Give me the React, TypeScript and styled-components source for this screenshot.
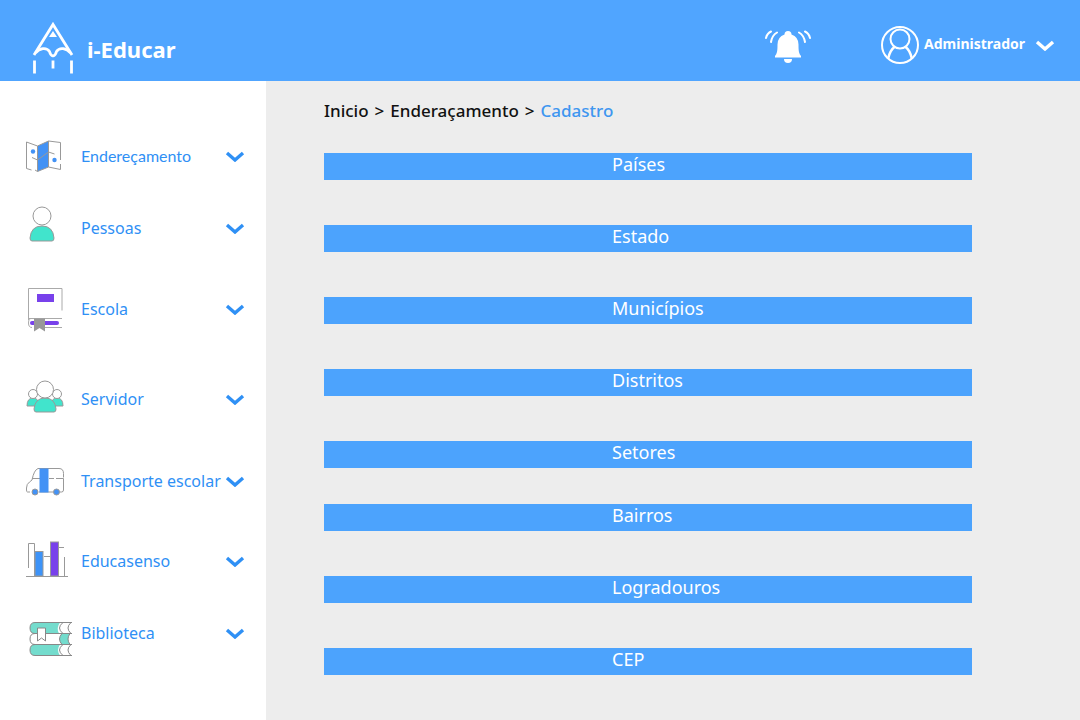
import React from "react";
import styled, { createGlobalStyle } from "styled-components";

const GlobalStyle = createGlobalStyle`
  *, *::before, *::after { box-sizing: border-box; }
  body {
    margin: 0;
    background: #fff;
    font-family: "Noto Sans", "Open Sans", sans-serif;
  }
  button { font: inherit; border: 0; background: none; padding: 0; cursor: pointer; }
  a { color: inherit; text-decoration: none; }
  svg { display: block; flex: none; }
`;

const Page = styled.div`
  min-height: 100vh;
  display: flex;
  flex-direction: column;
`;

const Header = styled.header`
  height: 81px;
  display: flex;
  align-items: center;
  padding: 8px 25px 0 32px;
  background: #50a5ff;
  color: #fff;
`;

const Brand = styled.a`
  display: flex;
  align-items: center;
  gap: 13px;
  margin-right: auto;
  padding-top: 4px;
  font-size: 22px;
  line-height: 30px;
  font-weight: 700;
`;

const BrandName = styled.span`
  padding-top: 4px;
`;

const BellButton = styled.button`
  color: #fff;
  margin: 4px 70px 0 0;
`;

const AccountButton = styled.button`
  display: flex;
  align-items: center;
  gap: 5px;
  color: #fff;
  font-size: 14px;
  line-height: 20px;
  font-weight: 700;
`;

const AccountName = styled.span`
  margin-right: 5px;
  padding-bottom: 2px;
`;

const Body = styled.div`
  flex: 1;
  display: flex;
`;

const Sidebar = styled.nav`
  width: 266px;
  flex: none;
  padding-top: 39px;
  background: #fff;
`;

const MenuItem = styled.button<{ $height: number; $narrow?: boolean }>`
  width: 100%;
  height: ${(p) => p.$height}px;
  display: grid;
  grid-template-columns: 56px 1fr 20px;
  align-items: center;
  padding: 0 21px 0 25px;
  color: #2f90f5;
  font-family: ${(p) => (p.$narrow ? '"Lato", sans-serif' : "inherit")};
  font-size: 16px;
  line-height: 24px;
  text-align: left;
  white-space: nowrap;
`;

const Main = styled.main`
  flex: 1;
  min-width: 0;
  padding: 18px 108px 45px 58px;
  background: #ededed;
`;

const Breadcrumb = styled.nav`
  display: flex;
  flex-wrap: wrap;
  gap: 6px;
  margin-bottom: 30px;
  color: #111;
  font-size: 17px;
  line-height: 24px;
  font-weight: 500;
`;

const Current = styled.a`
  color: #3e96f0;
`;

const Groups = styled.div`
  display: flex;
  flex-direction: column;
  gap: 36px;
`;

const LinkList = styled.ul`
  list-style: none;
  margin: 0;
  padding: 0;
  display: flex;
  flex-direction: column;
  gap: 45px;
`;

const BarLink = styled.a`
  display: grid;
  grid-template-columns: 4fr 5fr;
  height: 27px;
  background: #4ca3fd;
  color: #fff;
  font-size: 18px;
  line-height: 22px;
`;

const BarLabel = styled.span`
  grid-column: 2;
`;

const Chevron = () => (
  <svg width="20" height="12" viewBox="0 0 20 12" fill="none" stroke="currentColor" strokeWidth="3.4" aria-hidden="true">
    <path d="M2 3l8 7 8-7" strokeLinejoin="miter" />
  </svg>
);

const LogoIcon = () => (
  <svg width="42" height="54" viewBox="0 0 42 54" fill="none" stroke="#fff" aria-hidden="true">
    <path d="M2 35L21 4.500l19 30.500" strokeWidth="2.800" />
    <path d="M3.500 33c4-5 11-6 14-1.500q1 4 3.500 4.500q2.500-.5 3.500-4.500c3-4.500 10-3.500 14 1.500" strokeWidth="2.800" />
    <path d="M21 11l4 6h-8z" fill="#fff" stroke="none" />
    <path d="M2.500 40.500v13M39.500 40.500v13" strokeWidth="2.800" />
    <path d="M21 40.500v8" strokeWidth="2.800" />
  </svg>
);

const BellIcon = () => (
  <svg width="46" height="34" viewBox="0 0 46 34" fill="none" stroke="currentColor" strokeWidth="2" strokeLinecap="round" aria-hidden="true">
    <path d="M23 1a3.500 3.500 0 0 1 3.500 3.500q7 2.500 7 10c0 7 .5 9 2.500 11.500v1.500H10V26c2-2.500 2.500-4.500 2.500-11.500q0-7.500 7-10A3.500 3.500 0 0 1 23 1z" fill="currentColor" stroke="none" />
    <path d="M19 29h8q0 4-4 4t-4-4z" fill="currentColor" stroke="none" />
    <path d="M6 1.500Q2 3.500 1 8M12 2.500Q7 5.500 6 12M40 1.500q4 2 5 6.500M34 2.500q5 3 6 9.500" />
  </svg>
);

const AvatarIcon = () => (
  <svg width="38" height="38" viewBox="0 0 38 38" fill="none" stroke="currentColor" strokeWidth="2" aria-hidden="true">
    <circle cx="19" cy="19" r="18" />
    <ellipse cx="19" cy="13" rx="9.500" ry="9.500" />
    <path d="M7 33Q9 24 14 20.500M31 33q-2-9-7-12.500" strokeWidth="2.500" />
  </svg>
);

const MapIcon = () => (
  <svg width="38" height="32" viewBox="0 0 38 32" fill="none" stroke="#999" aria-hidden="true">
    <path d="M12.500 6L23.500 1v26l-11 4.500z" fill="#4392f5" />
    <path d="M12.500 6L1.500 2v26.500l5 1.500M23.500 1l12 1.500V20M35.500 24v5.500L23.500 27M10 30l2.500 1.500" />
    <path d="M7 17.500l5.500 2.500 11-8 6 2" />
    <circle cx="8" cy="11.500" r="2.200" fill="#4392f5" stroke="none" />
    <circle cx="29.500" cy="20" r="2.200" fill="#4392f5" stroke="none" />
  </svg>
);

const PersonIcon = () => (
  <svg width="34" height="44" viewBox="0 4 34 44" stroke="#999" fill="none" aria-hidden="true">
    <path d="M7 39q-2 0-2-3Q6 24 17 24t12 12q0 3-2 3z" fill="#41e4cc" />
    <circle cx="17" cy="14" r="9" fill="#fff" />
  </svg>
);

const BookIcon = () => (
  <svg width="38" height="46" viewBox="0 0 38 46" fill="none" stroke="#aaa" aria-hidden="true">
    <path d="M3.500 34V2.500H37v22M3.500 32.500H37M6 32.500q-2.500 0-2.500 4.500T7 41.500M20 41.500h17" />
    <rect x="12" y="8" width="17" height="8" fill="#7841eb" stroke="none" />
    <rect x="5" y="35" width="29" height="4" rx="2" fill="#7841eb" stroke="none" />
    <path d="M9 32.500h11v13l-5.500-3.500L9 45.500z" fill="#999" stroke="none" />
  </svg>
);

const TeamIcon = () => (
  <svg width="40" height="38" viewBox="0 3 40 38" fill="#41e4cc" stroke="#999" aria-hidden="true">
    <path d="M2 29q0-8 6-8t6 8zM26 29q0-8 6-8t6 8z" />
    <circle cx="8" cy="17" r="4.500" fill="#fff" />
    <circle cx="32" cy="17" r="4.500" fill="#fff" />
    <path d="M11 35q-2 0-2-3Q10 21 20 21t11 11q0 3-2 3z" />
    <circle cx="20" cy="12.500" r="8.500" fill="#fff" />
  </svg>
);

const VanIcon = () => (
  <svg width="40" height="30" viewBox="0 0 40 30" fill="none" stroke="#999" aria-hidden="true">
    <path d="M15 2.500h19q4.500 0 4.500 5v4M31 12.500h7.500V24q0 2-2 2H35M28 26H14M5 26H2.500q-1 0-1-2v-2q0-4 3-6l2.500-2q2-10 6-11.500h3M7 12.500h8M24 12.500h5" />
    <rect x="15" y="3" width="8" height="23" fill="#4392f5" stroke="#4392f5" />
    <circle cx="10" cy="26" r="3" fill="#4392f5" />
    <circle cx="31.500" cy="26" r="3" fill="#4392f5" />
  </svg>
);

const ChartIcon = () => (
  <svg width="44" height="40" viewBox="0 3 44 40" fill="none" stroke="#999" aria-hidden="true">
    <path d="M1 38.500h42M3.500 30V5.500h6V38M19 18.500h6M34 9.500h5M39.500 19v19" />
    <rect x="10" y="13.500" width="8" height="24.500" fill="#3d93f8" />
    <rect x="25.500" y="4" width="8" height="34" fill="#7841eb" />
  </svg>
);

const BooksIcon = () => (
  <svg width="48" height="48" viewBox="0 -12 48 48" fill="none" stroke="#888" aria-hidden="true">
    <path d="M46 1.500H10q-5 0-5 5.500t5 5.500h24q-3-5.500 1-11M46 23.500H10q-5 0-5 5.500t5 5.500h25q-4-5.500 0-11" fill="#74dccd" stroke="none" />
    <path d="M37 12.500h8q-4 5.500 0 11h-8q-5-5.500 0-11z" fill="#74dccd" />
    <path d="M38 1.500h9v11h-9q-7-5.500 0-11zM38 23.500h9v11h-9q-7-5.500 0-11z" fill="#fff" stroke="none" />
    <path d="M47 1.500H10q-5 0-5 5.500t5 5.500h37M47 23.500H10q-5 0-5 5.500t5 5.500h37M10 12.500q-5 0-5 5.500t5 5.500M38 1.500q-7 5.500 0 11M46 1.500q-6 5.500 0 11M38 23.500q-7 5.500 0 11M46 23.500q-6 5.500 0 11" />
    <path d="M12.500 7h8v13l-4-3-4 3z" fill="#fff" />
  </svg>
);

const menu = [
  { label: "Endereçamento", height: 72, Icon: MapIcon, narrow: true },
  { label: "Pessoas", height: 72, Icon: PersonIcon },
  { label: "Escola", height: 90, Icon: BookIcon },
  { label: "Servidor", height: 90, Icon: TeamIcon },
  { label: "Transporte escolar", height: 74, Icon: VanIcon },
  { label: "Educasenso", height: 86, Icon: ChartIcon },
  { label: "Biblioteca", height: 58, Icon: BooksIcon },
];

const groups = [
  ["Países", "Estado", "Municípios", "Distritos", "Setores"],
  ["Bairros", "Logradouros", "CEP"],
];

export default function App() {
  return (
    <Page>
      <GlobalStyle />
      <Header>
        <Brand href="#">
          <LogoIcon />
          <BrandName>i-Educar</BrandName>
        </Brand>
        <BellButton type="button" aria-label="Notificações">
          <BellIcon />
        </BellButton>
        <AccountButton type="button">
          <AvatarIcon />
          <AccountName>Administrador</AccountName>
          <Chevron />
        </AccountButton>
      </Header>
      <Body>
        <Sidebar>
          {menu.map(({ label, height, Icon, narrow }) => (
            <MenuItem key={label} type="button" $height={height} $narrow={narrow}>
              <Icon />
              <span>{label}</span>
              <Chevron />
            </MenuItem>
          ))}
        </Sidebar>
        <Main>
          <Breadcrumb>
            <a href="#">Inicio</a>
            <span>&gt;</span>
            <a href="#">Enderaçamento</a>
            <span>&gt;</span>
            <Current href="#">Cadastro</Current>
          </Breadcrumb>
          <Groups>
            {groups.map((items) => (
              <LinkList key={items[0]}>
                {items.map((item) => (
                  <li key={item}>
                    <BarLink href="#">
                      <BarLabel>{item}</BarLabel>
                    </BarLink>
                  </li>
                ))}
              </LinkList>
            ))}
          </Groups>
        </Main>
      </Body>
    </Page>
  );
}
